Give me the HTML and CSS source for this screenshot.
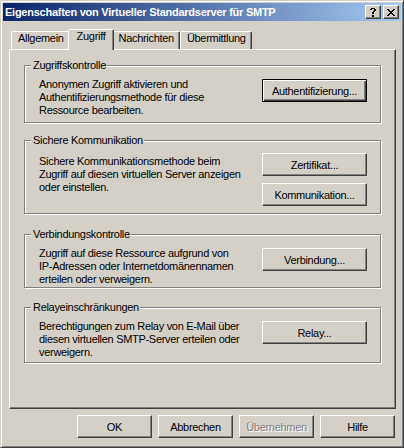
FILE: index.html
```html
<!DOCTYPE html>
<html>

<head>
  <title>Eigenschaften von Virtueller Standardserver für SMTP</title>
  <link rel="stylesheet" href="styles.css">
</head>

<body>
  <div class="window">
    <div class="titlebar">
      <span class="title">Eigenschaften von Virtueller Standardserver für SMTP</span>
      <div class="caption-buttons">
        <button class="cap-btn" title="Hilfe">
          <svg width="6" height="9" viewBox="0 0 6 9">
            <path d="M1 0h4v1H1z M0 1h2v1H0z M4 1h2v1H4z M4 2h2v1H4z M3 3h2v1H3z M2 4h2v1H2z M2 5h2v1H2z M2 7h2v1H2z M2 8h2v1H2z" fill="#000"/>
          </svg>
        </button>
        <button class="cap-btn" title="Schließen">
          <svg width="8" height="7" viewBox="0 0 8 7">
            <path d="M0 0h2v1H0z M6 0h2v1H6z M1 1h2v1H1z M5 1h2v1H5z M2 2h4v1H2z M3 3h2v1H3z M2 4h4v1H2z M1 5h2v1H1z M5 5h2v1H5z M0 6h2v1H0z M6 6h2v1H6z" fill="#000"/>
          </svg>
        </button>
      </div>
    </div>

    <div class="tabs">
      <div class="tab">Allgemein</div>
      <div class="tab tab-active">Zugriff</div>
      <div class="tab">Nachrichten</div>
      <div class="tab">Übermittlung</div>
    </div>

    <div class="panel">
      <fieldset class="group group-access">
        <legend>Zugriffskontrolle</legend>
        <div class="group-row">
          <p class="group-text">Anonymen Zugriff aktivieren und<br>Authentifizierungsmethode für diese<br>Ressource bearbeiten.</p>
          <div class="group-buttons">
            <button class="btn btn-wide btn-default">Authentifizierung...</button>
          </div>
        </div>
      </fieldset>

      <fieldset class="group group-secure">
        <legend>Sichere Kommunikation</legend>
        <div class="group-row">
          <p class="group-text">Sichere Kommunikationsmethode beim<br>Zugriff auf diesen virtuellen Server anzeigen<br>oder einstellen.</p>
          <div class="group-buttons">
            <button class="btn btn-wide">Zertifikat...</button>
            <button class="btn btn-wide">Kommunikation...</button>
          </div>
        </div>
      </fieldset>

      <fieldset class="group group-connect">
        <legend>Verbindungskontrolle</legend>
        <div class="group-row">
          <p class="group-text">Zugriff auf diese Ressource aufgrund von<br>IP-Adressen oder Internetdomänennamen<br>erteilen oder verweigern.</p>
          <div class="group-buttons">
            <button class="btn btn-wide">Verbindung...</button>
          </div>
        </div>
      </fieldset>

      <fieldset class="group group-relay">
        <legend>Relayeinschränkungen</legend>
        <div class="group-row">
          <p class="group-text">Berechtigungen zum Relay von E-Mail über<br>diesen virtuellen SMTP-Server erteilen oder<br>verweigern.</p>
          <div class="group-buttons">
            <button class="btn btn-wide">Relay...</button>
          </div>
        </div>
      </fieldset>
    </div>

    <div class="dialog-buttons">
      <button class="btn">OK</button>
      <button class="btn">Abbrechen</button>
      <button class="btn btn-disabled">Übernehmen</button>
      <button class="btn">Hilfe</button>
    </div>
  </div>
</body>

</html>
```

FILE: styles.css
```css
body {
  margin: 0;
  font-family: "Liberation Sans", Arial, sans-serif;
  font-size: 11px;
  line-height: 13px;
  letter-spacing: -0.3px;
  color: #000000;
}

.window {
  width: 404px;
  height: 448px;
  box-sizing: border-box;
  padding: 2px;
  background-color: #d4d0c8;
  border: 1px solid;
  border-color: #d4d0c8 #404040 #404040 #d4d0c8;
  box-shadow: inset 1px 1px #ffffff, inset -1px -1px #808080;
}

/* title bar */
.titlebar {
  height: 18px;
  display: flex;
  align-items: center;
  justify-content: space-between;
  padding: 0 2px;
  background: linear-gradient(to right, #0a246a, #a6caf0);
}

.title {
  color: #ffffff;
  font-weight: bold;
  letter-spacing: -0.25px;
  white-space: nowrap;
}

.caption-buttons {
  display: flex;
  gap: 2px;
}

.cap-btn {
  width: 16px;
  height: 14px;
  padding: 0;
  display: flex;
  align-items: center;
  justify-content: center;
  background-color: #d4d0c8;
  border: 1px solid;
  border-color: #ffffff #404040 #404040 #ffffff;
  box-shadow: inset -1px -1px #808080;
}

/* tabs */
.tabs {
  display: flex;
  align-items: flex-start;
  height: 20px;
  margin: 8px 0 0 6px;
  padding-left: 2px;
}

.tab {
  height: 18px;
  margin-top: 2px;
  box-sizing: border-box;
  padding: 0 5px 0 6px;
  border: 1px solid;
  border-bottom: none;
  border-color: #ffffff #404040 transparent #ffffff;
  border-radius: 2px 2px 0 0;
  box-shadow: inset -1px 0 #808080;
  background-color: #d4d0c8;
  white-space: nowrap;
}

.tab-active {
  position: relative;
  z-index: 1;
  height: 21px;
  margin: 0 -2px -1px;
  padding: 0 7px 0 8px;
}

/* property page */
.panel {
  width: 387px;
  height: 360px;
  box-sizing: border-box;
  margin-left: 6px;
  padding: 9px 14px 0;
  border: 1px solid;
  border-color: #ffffff #404040 #404040 #ffffff;
  box-shadow: inset -1px -1px #808080;
}

.group {
  margin: 0;
  min-width: 0;
  padding: 6px 13px 0 14px;
  border: 1px solid #808080;
  box-shadow: inset 1px 1px #ffffff, 1px 1px #ffffff;
}

.group legend {
  margin-left: -8px;
  padding: 0 1px 0 2px;
  background-color: #d4d0c8;
  line-height: 13px;
}

.group-access {
  padding-bottom: 5px;
}

.group-secure {
  margin-top: 11px;
  padding-bottom: 7px;
}

.group-connect {
  margin-top: 14px;
  padding-bottom: 1px;
}

.group-relay {
  margin-top: 13px;
  padding-bottom: 3px;
}

.group-row {
  display: flex;
  justify-content: space-between;
  align-items: flex-start;
}

.group-text {
  margin: 0;
  white-space: nowrap;
}

.group-secure .group-text {
  margin-top: 2px;
}

.group-buttons {
  display: flex;
  flex-direction: column;
  gap: 7px;
  margin-top: 1px;
}

.group-secure .group-buttons {
  margin-top: 0;
}

/* push buttons */
.btn {
  width: 75px;
  height: 23px;
  padding: 0;
  font-family: inherit;
  font-size: 11px;
  letter-spacing: inherit;
  color: #000000;
  background-color: #d4d0c8;
  border: 1px solid;
  border-color: #ffffff #404040 #404040 #ffffff;
  box-shadow: inset -1px -1px #808080;
}

.btn-wide {
  width: 105px;
}

.btn-default {
  border-color: #000000;
  box-shadow: inset 1px 1px #ffffff, inset -1px -1px #404040, inset -2px -2px #808080;
}

.btn-disabled {
  color: #808080;
  text-shadow: 1px 1px 0 #ffffff;
}

.dialog-buttons {
  display: flex;
  justify-content: flex-end;
  gap: 6px;
  margin-top: 6px;
  padding-right: 6px;
}
```
